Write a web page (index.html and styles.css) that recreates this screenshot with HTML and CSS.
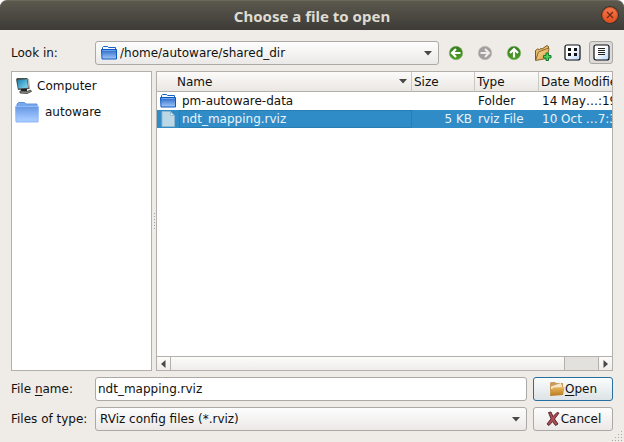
FILE: index.html
```html
<!DOCTYPE html>
<html lang="en">
<head>
<meta charset="utf-8">
<title>Choose a file to open</title>
<link rel="stylesheet" href="styles.css">
</head>
<body>
<svg class="defs" aria-hidden="true">
  <defs>
    <linearGradient id="blue" x1="0" y1="0" x2="0" y2="1"><stop offset="0" stop-color="#2465c6"/><stop offset="1" stop-color="#a4c8f8"/></linearGradient>
    <linearGradient id="pale" x1="0" y1="0" x2="0" y2="1"><stop offset="0" stop-color="#6496e2"/><stop offset="0.8" stop-color="#a3c7ff"/></linearGradient>
    <linearGradient id="green" x1="0" y1="0" x2="0" y2="1"><stop offset="0" stop-color="#357a1e"/><stop offset="1" stop-color="#4fa028"/></linearGradient>
    <linearGradient id="gold" x1="0" y1="0" x2="0" y2="1"><stop offset="0" stop-color="#e9b85c"/><stop offset="1" stop-color="#b87a1c"/></linearGradient>
    <linearGradient id="tan" x1="0" y1="0" x2="1" y2="1"><stop offset="0" stop-color="#fbe2a4"/><stop offset="1" stop-color="#d99a3a"/></linearGradient>
    <linearGradient id="screen" x1="0" y1="0" x2="1" y2="1"><stop offset="0" stop-color="#1480b0"/><stop offset="1" stop-color="#8edcf2"/></linearGradient>
    <linearGradient id="tile" x1="0" y1="0" x2="1" y2="1"><stop offset="0.4" stop-color="#fff"/><stop offset="1" stop-color="#b5d5f8"/></linearGradient>
    <symbol id="folder" viewBox="0 0 16 14">
      <path d="M1.500 4V1.500l1-1h4l1 1h7V4" fill="#f2f7ff" stroke="#1760c4"/>
      <path d="M.5 3.500h15V13H1z" fill="url(#blue)" stroke="#0b58c2"/>
      <path d="M1.500 4.500h13" stroke="#6ea2ee"/>
    </symbol>
    <symbol id="caret" viewBox="0 0 8 5"><path d="M0 0h8L4 4.500z" fill="#484848"/></symbol>
  </defs>
</svg>
<main class="dialog">
  <header class="titlebar">
    <h1>Choose a file to open</h1>
    <button class="close" aria-label="Close"><svg width="8" height="8" viewBox="0 0 8 8"><path d="M1 1l6 6M7 1L1 7" stroke="#6b2c12" stroke-width="1.200"/></svg></button>
  </header>
  <form class="content">
    <div class="row">
      <label class="caption" for="dir">Look in:</label>
      <div class="combo with-icon">
        <svg class="combo-icon" width="16" height="14"><use href="#folder"/></svg>
        <select id="dir"><option>/home/autoware/shared_dir</option></select>
        <svg class="combo-caret" width="8" height="5"><use href="#caret"/></svg>
      </div>
      <div class="tools">
        <button type="button" class="tool" aria-label="Back"><svg width="16" height="16" viewBox="0 0 16 16"><circle cx="8" cy="8" r="6.700" fill="url(#green)" stroke="#7fae68" stroke-width=".6"/><path d="M8 4L4 8l4 4M4.500 8h8" fill="none" stroke="#fff" stroke-width="2.200"/></svg></button>
        <button type="button" class="tool" aria-label="Forward"><svg width="16" height="16" viewBox="0 0 16 16"><circle cx="8" cy="8" r="6.700" fill="#a09f9d" stroke="#bbb9b6" stroke-width=".6"/><path d="M8 4l4 4-4 4M11.500 8h-8" fill="none" stroke="#efedea" stroke-width="2"/></svg></button>
        <button type="button" class="tool" aria-label="Parent directory"><svg width="16" height="16" viewBox="0 0 16 16"><circle cx="8" cy="8" r="6.700" fill="url(#green)" stroke="#7fae68" stroke-width=".6"/><path d="M4 8l4-4 4 4M8 4.500v8" fill="none" stroke="#fff" stroke-width="2.200"/></svg></button>
        <button type="button" class="tool" aria-label="Create new folder"><svg width="18" height="18" viewBox="0 0 18 18"><path d="M1.500 16V6.500l2-1.500 2 .5L7 4.500l1 .5 5-3.500 1.500 1V6" fill="#e8bd6c" stroke="#7c5a24"/><path d="M1.500 16.500L4.500 8 14.500 4l.5 1-2.500 9.500z" fill="url(#tan)" stroke="#8a652b"/><path d="M9.500 11.500h2.500v-2.500h2.500v2.500H17V14h-2.500v2.500H12V14H9.500z" fill="#4cd05c" stroke="#157b33"/></svg></button>
        <button type="button" class="tool" aria-label="List view"><svg width="17" height="17" viewBox="0 0 17 17"><rect x="1" y="1" width="15" height="15" rx="2" fill="url(#tile)" stroke="#0a0f18" stroke-width="1.200"/><path d="M4 4h3v3H4zM10 4h3v3h-3zM4 9h3v3H4zM10 9h3v3h-3z" fill="#111"/></svg></button>
        <button type="button" class="tool checked" aria-label="Detail view" aria-pressed="true"><svg width="17" height="17" viewBox="0 0 17 17"><rect x="1" y="1" width="15" height="15" rx="2" fill="url(#tile)" stroke="#0a0f18" stroke-width="1.200"/><path d="M5 4.500h7M5 6.500h7M5 8.500h7M5 10.500h7" stroke="#222"/></svg></button>
      </div>
    </div>

    <div class="browser">
      <ul class="places">
        <li class="place"><svg width="18" height="18" viewBox="0 0 18 18"><path d="M1 2.500L2 1h10.500L14 12 3 13z" fill="#4a4f4d"/><path d="M2.500 3L12 2.200l1 8.500-9.500.8z" fill="url(#screen)"/><path d="M13.500 2l1 10" stroke="#a5a8a0"/><path d="M6 12h6v2H6z" fill="#20211f"/><path d="M5 14l7 .5 3.500-1.500 1 1.500-4.500 2-7-.5z" fill="#8b8f87" stroke="#383a37" stroke-width=".8"/></svg><span>Computer</span></li>
        <li class="place home"><svg width="24" height="21" viewBox="0 0 24 21"><path d="M2 5V2l1.500-1.500h6L11 2h11v3" fill="#77a7ee" stroke="#5f93df"/><path d="M.5 4.500h23l-.5 15.500H1z" fill="url(#pale)" stroke="#8fb8f7"/></svg><span>autoware</span></li>
      </ul>
      <div class="splitter"><i></i></div>
      <section class="files">
        <div class="list">
          <table>
            <colgroup><col><col class="c-size"><col class="c-type"><col class="c-date"></colgroup>
            <thead><tr><th class="h-name"><div class="head"><span>Name</span><svg width="8" height="5"><use href="#caret"/></svg></div></th><th>Size</th><th>Type</th><th>Date Modified</th></tr></thead>
            <tbody>
              <tr><td class="name"><div class="entry"><svg width="16" height="14"><use href="#folder"/></svg><span>pm-autoware-data</span></div></td><td class="size"></td><td>Folder</td><td>14 May…:19</td></tr>
              <tr class="selected"><td class="name"><div class="entry"><svg width="16" height="16" viewBox="0 0 16 16"><path d="M2 .5h8.500l4 4v11H2z" fill="#bcd7e6" stroke="#8db8cf"/><path d="M10.500 1v3.500h3.500z" fill="#f2f8fb" stroke="#7fa9c0" stroke-width=".7"/></svg><span>ndt_mapping.rviz</span></div></td><td class="size">5 KB</td><td>rviz File</td><td>10 Oct …7:33</td></tr>
            </tbody>
          </table>
        </div>
        <div class="scrollbar">
          <button type="button" aria-label="Scroll left"><svg width="5" height="8" viewBox="0 0 5 8"><path d="M4.500 0v8L0 4z" fill="#484848"/></svg></button>
          <div class="track"><div class="thumb"></div></div>
          <button type="button" class="right" aria-label="Scroll right"><svg width="5" height="8" viewBox="0 0 5 8"><path d="M.5 0v8L5 4z" fill="#484848"/></svg></button>
        </div>
      </section>
    </div>

    <div class="row">
      <label class="caption" for="name">File <u>n</u>ame:</label>
      <input class="field" id="name" type="text" value="ndt_mapping.rviz">
      <button type="button" class="action default"><svg width="16" height="16" viewBox="0 0 16 16"><path d="M1 14.500V2l1-1h4l1 1h7v4" fill="#c99b5c"/><path d="M2 8V5.500l10-3.500 1.500 5z" fill="#f8e6cc"/><path d="M4 6.500l11.500-.5L14 14 1 15z" fill="url(#gold)"/></svg><span><u>O</u>pen</span></button>
    </div>
    <div class="row">
      <label class="caption" for="type">Files of type:</label>
      <div class="combo">
        <select id="type"><option>RViz config files (*.rviz)</option></select>
        <svg class="combo-caret" width="8" height="5"><use href="#caret"/></svg>
      </div>
      <button type="button" class="action"><svg width="16" height="16" viewBox="0 0 16 16"><path d="M3.500 1.500l2.500-.5L8 5.500 12 1.500l2 .5-4.500 6 3.500 5-2.500 1.500L7.500 10.500 4 14.500 2 13l4-5.200z" fill="#b04a54" stroke="#4d1f24" stroke-width=".9"/></svg><span>Cancel</span></button>
    </div>
  </form>
  <svg class="grip" width="12" height="12" viewBox="0 0 12 12" aria-hidden="true"><path d="M10 1h1v1h-1zM7 4h1v1H7zM10 4h1v1h-1zM4 7h1v1H4zM7 7h1v1H7zM10 7h1v1h-1zM1 10h1v1H1zM4 10h1v1H4zM7 10h1v1H7zM10 10h1v1h-1z" fill="#aaa8a4"/></svg>
</main>
</body>
</html>
```
FILE: styles.css
```css
* { box-sizing: border-box; }

body {
  margin: 0;
  background: #fff;
  color: #111;
  font: 12px/18px "DejaVu Sans", sans-serif;
}

button, input, select { font: inherit; color: inherit; margin: 0; }
svg { display: block; flex: none; }
.defs { position: absolute; width: 0; height: 0; }

.dialog {
  position: relative;
  display: flex;
  flex-direction: column;
  min-height: 100vh;
  background: #efebe7;
  border-radius: 7px 7px 0 0;
}

.titlebar {
  position: relative;
  display: flex;
  align-items: center;
  justify-content: center;
  height: 30px;
  background: linear-gradient(#5b584d, #3d3b37);
  border-top: 1px solid #6a675b;
  border-radius: 7px 7px 0 0;
}
.titlebar h1 {
  margin: 0;
  color: #dfdbd2;
  font: bold 15px/22px "Noto Sans", sans-serif;
}
.close {
  position: absolute;
  right: 6px;
  top: 6px;
  display: grid;
  place-items: center;
  width: 16px;
  height: 16px;
  padding: 0;
  border: 1px solid #d9501f;
  border-radius: 50%;
  background: linear-gradient(#f4774e, #e2501f);
  box-shadow: 0 0 0 1px #35332f;
}

.content {
  flex: 1;
  display: flex;
  flex-direction: column;
  gap: 6px;
  padding: 11px;
}
.row { display: flex; height: 24px; }
.caption { flex: none; width: 84px; line-height: 24px; }

u { text-decoration: underline; text-underline-offset: 2px; }

.combo { position: relative; flex: 1; min-width: 0; }
.combo select {
  width: 100%;
  height: 24px;
  padding: 0 20px 0 4px;
  appearance: none;
  border: 1px solid #aba8a5;
  border-radius: 3px;
  background: linear-gradient(#fdfdfd, #ebe9e7);
}
.combo.with-icon select { padding-left: 24px; }
.combo-icon, .combo-caret { position: absolute; pointer-events: none; }
.combo-icon { left: 6px; top: 5px; }
.combo-caret { right: 7px; top: 10px; }

.tools { display: flex; gap: 5px; margin-left: 5px; }
.tool {
  display: grid;
  place-items: center;
  width: 24px;
  height: 23px;
  padding: 0;
  border: 1px solid transparent;
  border-radius: 3px;
  background: none;
}
.tool.checked { border-color: #aaa7a4; background: #dcd9d6; }

.browser { flex: 1; display: flex; min-height: 120px; }
.places, .files { border: 1px solid #b3afab; background: #fff; }
.places {
  flex: none;
  width: 141px;
  margin: 0;
  padding: 4px 3px;
  list-style: none;
}
.place { display: flex; align-items: center; gap: 4px; height: 20px; }
.place.home { gap: 6px; height: 32px; }
.splitter {
  flex: none;
  width: 4px;
  display: grid;
  place-items: center;
}
.splitter i {
  width: 1px;
  height: 17px;
  background: repeating-linear-gradient(#a5a29f 0 1px, transparent 1px 3px);
}

.files { flex: 1; min-width: 0; display: flex; flex-direction: column; }
.list { flex: 1; overflow: hidden; }
table {
  width: calc(100% + 27px);
  table-layout: fixed;
  border-collapse: separate;
  border-spacing: 0;
}
.c-size { width: 63px; }
.c-type { width: 64px; }
.c-date { width: 100px; }
th, td { padding: 0 3px; text-align: left; white-space: nowrap; overflow: hidden; }
th {
  height: 20px;
  padding: 0 2px;
  font-weight: normal;
  background: linear-gradient(#fcfbfa, #eae7e3);
  border-right: 1px solid #cbc8c4;
  border-bottom: 1px solid #b3afab;
}
.h-name { padding: 0 4px 0 20px; }
.head { display: flex; align-items: center; justify-content: space-between; }
td { height: 18px; }
.name { padding: 0 0 0 3px; }
.size { text-align: right; }
.entry { display: flex; align-items: center; gap: 3px; height: 18px; }
.entry span { flex: 1; padding-left: 3px; }
.selected { background: #308cc6; color: #e9f3fa; }
.selected .entry span { height: 18px; line-height: 16px; border: 1px solid #287db3; padding-left: 2px; }

.scrollbar {
  display: flex;
  height: 14px;
  border-top: 1px solid #b3afab;
  background: #e2e1de;
}
.scrollbar button {
  display: grid;
  place-items: center;
  width: 14px;
  padding: 0;
  border: 0;
  border-right: 1px solid #b3afab;
  background: linear-gradient(#fbfbfa, #efedeb);
}
.scrollbar button.right { border-right: 0; border-left: 1px solid #b3afab; }
.track { flex: 1; }
.thumb {
  width: calc(100% - 33px);
  height: 100%;
  border-right: 1px solid #b3afab;
  background: linear-gradient(#fbfbfa, #efedeb);
}

.field {
  flex: 1;
  min-width: 0;
  padding: 0 2px;
  border: 1px solid #aba8a5;
  border-radius: 3px;
  background: #fff;
}
.action {
  display: flex;
  align-items: center;
  justify-content: center;
  flex: none;
  width: 80px;
  height: 24px;
  margin-left: 6px;
  padding: 0;
  border: 1px solid #aba8a5;
  border-radius: 3px;
  background: linear-gradient(#fdfdfd, #ebe9e7);
}
.action.default { border-color: #266f9e; background: linear-gradient(#fbfcfc, #dce3e6); }

.grip { position: absolute; right: 1px; bottom: 0; }
```
